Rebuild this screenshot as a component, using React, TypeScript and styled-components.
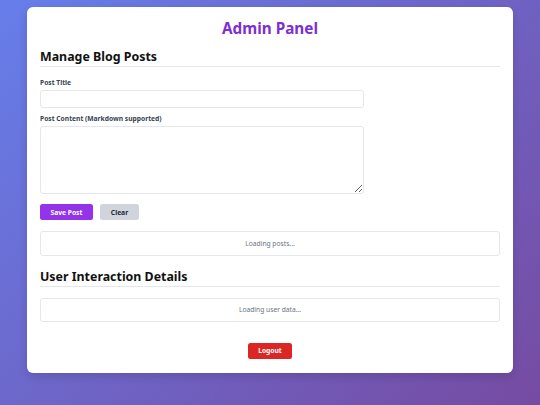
import styled, { createGlobalStyle } from "styled-components";

const GlobalStyle = createGlobalStyle`
	* {
		box-sizing: border-box;
	}
	html,
	body {
		margin: 0;
		padding: 0;
	}
	body {
		min-height: 405px;
		font-family: "Noto Sans", "Open Sans", sans-serif;
		background: linear-gradient(135deg, #667eea 0%, #764ba2 100%);
		overflow: hidden;
	}
`;

export default function App() {
	return (
		<>
			<GlobalStyle />
			<StyledPage>
				<StyledCard>
					<StyledTitle>Admin Panel</StyledTitle>

					<StyledSection>
						<StyledHeading>Manage Blog Posts</StyledHeading>
						<StyledForm onSubmit={(event) => event.preventDefault()}>
							<StyledField>
								<StyledLabel htmlFor="post-title">Post Title</StyledLabel>
								<StyledInput id="post-title" type="text" />
							</StyledField>
							<StyledField>
								<StyledLabel htmlFor="post-content">Post Content (Markdown supported)</StyledLabel>
								<StyledTextarea id="post-content" />
							</StyledField>
							<StyledActions>
								<StyledButton type="submit" $variant="primary">
									Save Post
								</StyledButton>
								<StyledButton type="button" $variant="secondary">
									Clear
								</StyledButton>
							</StyledActions>
						</StyledForm>
						<StyledPlaceholder>Loading posts...</StyledPlaceholder>
					</StyledSection>

					<StyledSection>
						<StyledHeading>User Interaction Details</StyledHeading>
						<StyledPlaceholder>Loading user data...</StyledPlaceholder>
					</StyledSection>

					<StyledFooter>
						<StyledButton type="button" $variant="danger">
							Logout
						</StyledButton>
					</StyledFooter>
				</StyledCard>
			</StyledPage>
		</>
	);
}

const StyledPage = styled.main`
	display: flex;
	justify-content: center;
	padding-top: 7px;
`;
const StyledCard = styled.div`
	width: 486px;
	padding: 11px 13px 14px;
	background: #ffffff;
	border-radius: 6px;
	box-shadow: 0 4px 10px rgba(0, 0, 0, 0.12);
`;
const StyledTitle = styled.h1`
	margin: 0;
	font-size: 15.3px;
	line-height: 20px;
	font-weight: 700;
	color: #7e2fd0;
	text-align: center;
`;
const StyledSection = styled.section`
	display: flex;
	flex-direction: column;
	margin-top: 10px;

	& + & {
		margin-top: 12px;
	}
`;
const StyledHeading = styled.h2`
	margin: 0;
	padding-bottom: 1px;
	font-size: 12.4px;
	line-height: 17px;
	font-weight: 700;
	color: #111111;
	border-bottom: 1px solid #e5e7eb;
`;
const StyledForm = styled.form`
	display: flex;
	flex-direction: column;
	margin-top: 11px;
`;
const StyledField = styled.div`
	display: flex;
	flex-direction: column;
	gap: 2px;
	width: 324px;

	& + & {
		margin-top: 6.5px;
	}
`;
const StyledLabel = styled.label`
	font-size: 6.7px;
	line-height: 10px;
	font-weight: 700;
	color: #374151;
`;
const StyledInput = styled.input`
	height: 17.5px;
	padding: 0 5px;
	font: inherit;
	border: 1px solid #e5e7eb;
	border-radius: 3px;
	outline: none;
`;
const StyledTextarea = styled.textarea`
	height: 68px;
	padding: 4px 5px;
	font: inherit;
	border: 1px solid #e5e7eb;
	border-radius: 3px;
	outline: none;
	resize: vertical;
`;
const StyledActions = styled.div`
	display: flex;
	gap: 7.5px;
	margin-top: 10px;
`;
const buttonColors = {
	primary: { bg: "#9333ea", fg: "#ffffff" },
	secondary: { bg: "#d1d5db", fg: "#1f2937" },
	danger: { bg: "#dc2626", fg: "#ffffff" },
};
const StyledButton = styled.button<{ $variant: keyof typeof buttonColors }>`
	height: 16px;
	padding: 0 10.5px;
	font-family: inherit;
	font-size: 6.7px;
	font-weight: 700;
	color: ${({ $variant }) => buttonColors[$variant].fg};
	background: ${({ $variant }) => buttonColors[$variant].bg};
	border: none;
	border-radius: 2.5px;
	cursor: pointer;
`;
const StyledPlaceholder = styled.div`
	display: flex;
	align-items: center;
	justify-content: center;
	height: 24.5px;
	margin-top: 11px;
	font-size: 6.7px;
	color: #6b7280;
	border: 1px solid #e5e7eb;
	border-radius: 3px;
`;
const StyledFooter = styled.div`
	display: flex;
	justify-content: center;
	margin-top: 20.5px;
`;
